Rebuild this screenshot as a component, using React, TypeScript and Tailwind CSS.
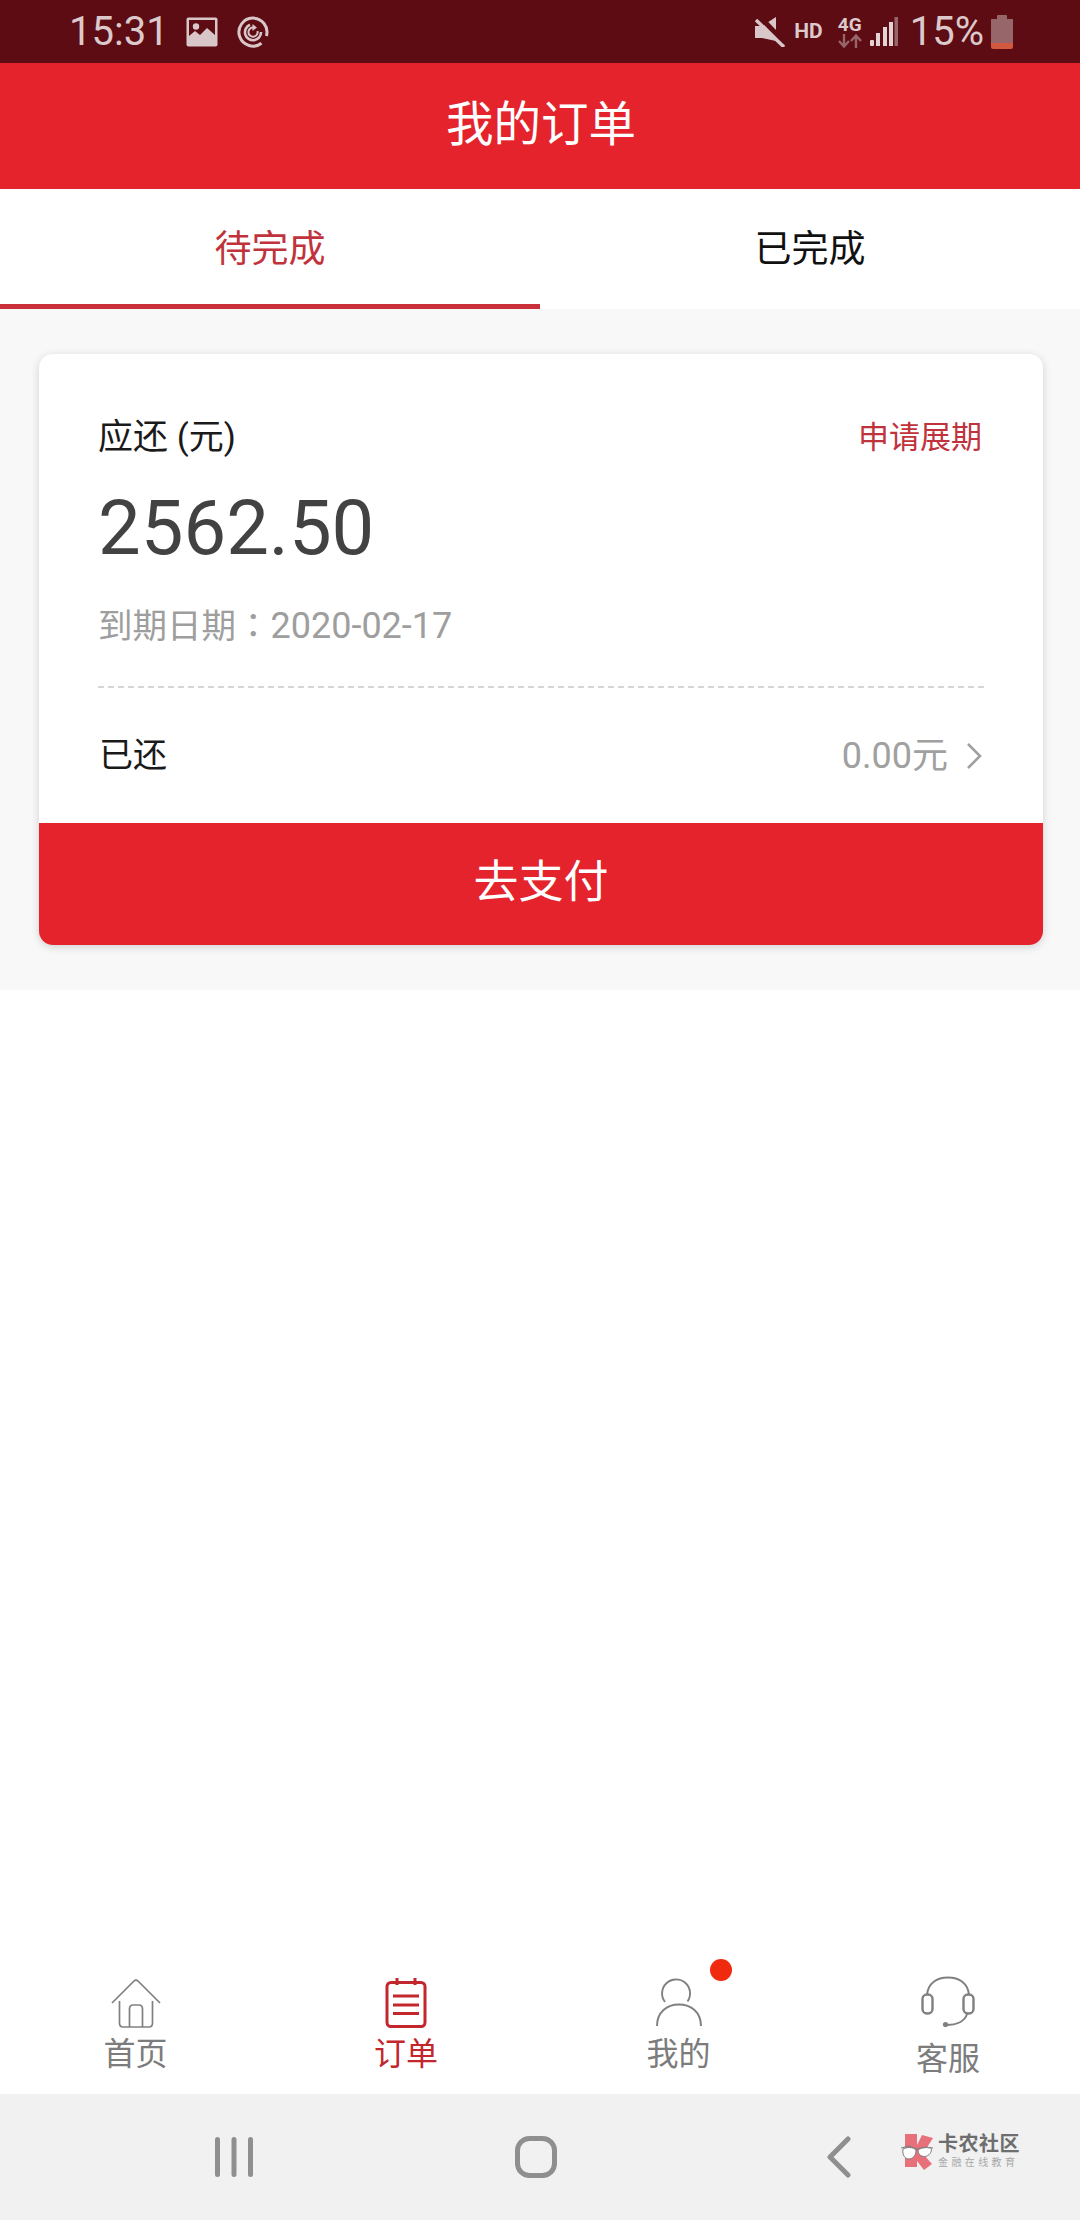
import React from "react";

const FONT = "font-['Roboto','Noto_Sans_CJK_SC',sans-serif]";

// Status bar glyphs
function GalleryIcon() {
  return (
    <svg width="32" height="30" viewBox="0 0 32 30" className="block">
      <rect x="0.5" y="0.5" width="31" height="29" rx="2" fill="#d9c6c9" />
      <rect x="3" y="3" width="26" height="19" fill="#5c0c12" />
      <circle cx="10" cy="9.5" r="3.2" fill="#d9c6c9" />
      <path d="M3 22 L3 19 L9 14 L14 18 L21 11 L29 18 L29 23 Z" fill="#d9c6c9" />
    </svg>
  );
}

function SyncIcon() {
  return (
    <svg width="32" height="32" viewBox="0 0 32 32" fill="none" stroke="#d9c6c9" className="block">
      <path d="M24.5 27.2 A14 14 0 1 1 29.4 20" strokeWidth="3" />
      <path d="M13 8.8 A8 8 0 1 0 24 16" strokeWidth="2.6" />
      <path d="M20.5 15 A4.6 4.6 0 1 1 16.5 11.5" strokeWidth="2" />
      <path d="M15.5 8 L20 11.6 L15.5 15 Z" fill="#d9c6c9" stroke="none" />
    </svg>
  );
}

function MuteIcon() {
  return (
    <svg width="30" height="30" viewBox="0 0 30 30" className="block">
      <path d="M0 9 H7 L21 0 V24 L7 21 H0 Z" fill="#d9c6c9" />
      <path d="M4 -1 L31 27" stroke="#5c0c12" strokeWidth="5" />
      <path d="M1 3 L29 30" stroke="#d9c6c9" strokeWidth="3.4" />
    </svg>
  );
}

function SignalIcon() {
  return (
    <svg width="28" height="30" viewBox="0 0 28 30" className="block">
      <rect x="0" y="23" width="4" height="6" rx="1" fill="#e3d3d5" />
      <rect x="6" y="16" width="4" height="13" fill="#e3d3d5" />
      <rect x="13" y="10" width="4" height="19" fill="#e3d3d5" />
      <rect x="19" y="5" width="4" height="24" fill="#e3d3d5" />
      <rect x="24.5" y="0" width="3.5" height="29" fill="#97666b" />
    </svg>
  );
}

function ArrowsIcon() {
  return (
    <svg width="24" height="14" viewBox="0 0 24 14" fill="none" stroke="#97666b" strokeWidth="2.4" className="block">
      <path d="M6 0 V12 M1 7 L6 12.5 L11 7" />
      <path d="M18 14 V2 M13 7 L18 1.5 L23 7" />
    </svg>
  );
}

function BatteryIcon() {
  return (
    <svg width="22" height="34" viewBox="0 0 22 34" className="block">
      <rect x="6" y="0" width="10" height="5" rx="1" fill="#97666b" />
      <rect x="0" y="4" width="22" height="26" fill="#97666b" />
      <path d="M0 28 H22 V32 A2 2 0 0 1 20 34 H2 A2 2 0 0 1 0 32 Z" fill="#d2593f" />
    </svg>
  );
}

// Tab bar icons
function HomeIcon() {
  return (
    <svg width="50" height="50" viewBox="0 0 50 50" fill="none" stroke="#808080" strokeWidth="1.7" className="block">
      <path d="M1 25 L23 3 Q25 1 27 3 L49 25" />
      <path d="M8.5 23 V45 Q8.5 49 12 49 H38 Q41.5 49 41.5 45 V23" />
      <path d="M18.5 49 V31 Q18.5 27 22 27 H28 Q31.5 27 31.5 31 V49" />
    </svg>
  );
}

function OrderIcon() {
  return (
    <svg width="42" height="50" viewBox="0 0 42 50" fill="none" stroke="#c1272d" className="block">
      <rect x="2" y="4.5" width="38" height="44" rx="4" strokeWidth="3" />
      <path d="M12 0 V7 M30 0 V7" strokeWidth="3" />
      <path d="M8 18 H34 M8 27 H34 M8 35.5 H34" strokeWidth="3" />
    </svg>
  );
}

function UserIcon() {
  return (
    <svg width="46" height="52" viewBox="0 0 46 52" fill="none" stroke="#808080" strokeWidth="1.9" className="block">
      <path d="M9 26 A14 14 0 1 1 31.5 25.5" />
      <path d="M1 50 C1 36 11 28.5 23 28.5 C35 28.5 45 36 45 50" />
    </svg>
  );
}

function HeadsetIcon() {
  return (
    <svg width="54" height="52" viewBox="0 0 54 52" fill="none" stroke="#808080" className="block">
      <path d="M6 19 C7 7 16 1.5 27 1.5 C38 1.5 47 7 48 19" strokeWidth="2" />
      <rect x="1.5" y="18.5" width="10" height="19" rx="4.5" strokeWidth="2.4" />
      <rect x="42.5" y="18.5" width="10" height="19" rx="4.5" strokeWidth="2.4" />
      <path d="M46 38 C44 45 36 49 25 49" strokeWidth="2" />
      <circle cx="24.5" cy="48.5" r="2.6" fill="#808080" stroke="none" />
    </svg>
  );
}

// System navigation glyphs
function RecentsIcon() {
  return (
    <svg width="38" height="40" viewBox="0 0 38 40" className="block" fill="#8f8f8f">
      <rect x="0" y="0" width="5" height="40" rx="2.5" />
      <rect x="16.5" y="0" width="5" height="40" rx="2.5" />
      <rect x="33" y="0" width="5" height="40" rx="2.5" />
    </svg>
  );
}

function HomeButtonIcon() {
  return (
    <svg width="42" height="42" viewBox="0 0 42 42" fill="none" className="block">
      <rect x="2.5" y="2.5" width="37" height="37" rx="12" stroke="#8f8f8f" strokeWidth="5" />
    </svg>
  );
}

function BackIcon() {
  return (
    <svg width="24" height="42" viewBox="0 0 24 42" fill="none" className="block">
      <path d="M21 3 L3 21 L21 39" stroke="#8f8f8f" strokeWidth="5" strokeLinecap="round" strokeLinejoin="round" />
    </svg>
  );
}

function BrandMark() {
  return (
    <svg width="34" height="36" viewBox="0 0 34 36" className="block">
      <path d="M5 0 H17 V11 L22 1 L33 4 L26 15 H18 L24 21 L32 30 L24 36 L17 27 V33 H5 Z" fill="#e8707b" />
      <path d="M1 14 L9 12 L17 15 L26 13 L33 14" fill="none" stroke="#7a7a7a" strokeWidth="1" />
      <path d="M3 15 C9 12 16 14 16 17 C16 22 12 25 9 25 C5 25 2 21 3 15 Z" fill="#ffffff" stroke="#7a7a7a" strokeWidth="1" />
      <path d="M18 16 C22 13 30 13 31.5 15 C31.5 20 27 23 23.5 22.5 C20 22 18 20 18 16 Z" fill="#ffffff" stroke="#7a7a7a" strokeWidth="1" />
    </svg>
  );
}

function TabItem({
  icon,
  label,
  active,
  width,
  labelGap,
}: {
  icon: React.ReactNode;
  label: string;
  active?: boolean;
  width: string;
  labelGap?: string;
}) {
  return (
    <div className={`flex flex-col items-center pt-[26px] ${width}`}>
      <div className="flex h-[53px] items-end">{icon}</div>
      <span
        className={`text-[32px] leading-[40px] ${active ? "text-[#c1272d]" : "text-[#7c7c7c]"} ${labelGap ?? "mt-[6px]"}`}
      >
        {label}
      </span>
    </div>
  );
}

export default function App() {
  return (
    <div className={`flex h-[2220px] w-[1080px] flex-col bg-white ${FONT}`}>
      {/* Status bar */}
      <div className="flex h-[63px] shrink-0 items-center justify-between bg-[#5c0c12] pl-[69px] pr-[67px] text-[#dcc9cc]">
        <div className="flex items-center">
          <span className="text-[40px] leading-none">15:31</span>
          <div className="ml-[17px]"><GalleryIcon /></div>
          <div className="ml-[19px]"><SyncIcon /></div>
        </div>
        <div className="flex items-center">
          <MuteIcon />
          <span className="ml-[9px] text-[21px] font-bold leading-none">HD</span>
          <div className="ml-[15px] flex flex-col items-center">
            <span className="text-[19px] font-bold leading-[18px]">4G</span>
            <ArrowsIcon />
          </div>
          <div className="ml-[8px]"><SignalIcon /></div>
          <span className="ml-[12px] text-[40px] leading-none">15%</span>
          <div className="ml-[7px]"><BatteryIcon /></div>
        </div>
      </div>

      {/* Header */}
      <div className="flex h-[126px] shrink-0 items-center justify-center bg-[#e4232c] pl-[2px]">
        <h1 className="text-[47.5px] font-normal leading-none text-white">我的订单</h1>
      </div>

      {/* Tabs */}
      <div className="flex h-[120px] shrink-0 bg-white">
        <div className="flex w-1/2 items-center justify-center border-b-[5px] border-[#c9303a] pt-[7px] text-[37px] text-[#c1333c]">
          待完成
        </div>
        <div className="flex w-1/2 items-center justify-center pt-[2px] text-[37px] text-[#111111]">
          已完成
        </div>
      </div>

      {/* Order list */}
      <div className="shrink-0 bg-[#f8f8f8] pb-[45px] pl-[39px] pr-[37px] pt-[45px]">
        <div className="overflow-hidden rounded-[14px] bg-white shadow-[0_2px_8px_rgba(0,0,0,0.16)]">
          <div className="px-[59px] pt-[64px]">
            <div className="flex items-center justify-between">
              <span className="text-[35px] leading-[40px] text-[#1a1a1a]">应还 (元)</span>
              <span className="mr-[2px] text-[31px] leading-[40px] text-[#c1333c]">申请展期</span>
            </div>
            <div className="mt-[26px] text-[76px] leading-[88px] text-[#424242]">2562.50</div>
            <div className="mt-[30px] text-[36px] leading-[42px] text-[#9e9e9e]">
              <span className="text-[34.5px]">到期日期</span>
              <span className="text-[34.5px] font-['Noto_Sans_CJK_TC',sans-serif]">：</span>2020-02-17
            </div>
            <div className="mt-[39px] border-t-2 border-dashed border-[#d6d6d6]" />
          </div>
          <div className="flex h-[135px] items-center justify-between pl-[60px] pr-[61px]">
            <span className="text-[34px] text-[#1a1a1a]">已还</span>
            <div className="flex items-center">
              <span className="text-[36px] text-[#a0a0a0]">0.00元</span>
              <svg width="16" height="28" viewBox="0 0 16 28" fill="none" className="ml-[18px] block">
                <path d="M2 2 L14 14 L2 26" stroke="#a0a0a0" strokeWidth="2.6" />
              </svg>
            </div>
          </div>
          <div className="flex h-[122px] items-center justify-center bg-[#e4232c] pb-[2px] text-[45px] text-white">
            去支付
          </div>
        </div>
      </div>

      <div className="flex-1" />

      {/* Bottom tab bar */}
      <div className="flex h-[145px] shrink-0 bg-white">
        <TabItem width="w-[271px]" icon={<HomeIcon />} label="首页" />
        <TabItem width="w-[270px]" icon={<OrderIcon />} label="订单" active />
        <div className="relative flex w-[275px]">
          <TabItem width="w-full" icon={<UserIcon />} label="我的" />
          <span className="absolute left-[169px] top-[10px] h-[22px] w-[22px] rounded-full bg-[#f02a0e]" />
        </div>
        <TabItem width="w-[264px]" icon={<HeadsetIcon />} label="客服" labelGap="mt-[11px]" />
      </div>

      {/* System navigation bar */}
      <div className="relative flex h-[126px] shrink-0 items-center bg-[#f1f1f1]">
        <div className="ml-[215px]"><RecentsIcon /></div>
        <div className="ml-[262px]"><HomeButtonIcon /></div>
        <div className="ml-[270px]"><BackIcon /></div>
        {/* Community watermark */}
        <div className="absolute left-[900px] top-[39px] flex items-center">
          <BrandMark />
          <div className="ml-[4px] flex flex-col">
            <span className="text-[20px] font-bold leading-[23px] tracking-[0.5px] text-[#6e6e6e]">卡农社区</span>
            <span className="text-[10px] leading-[14px] tracking-[3.4px] text-[#a8a8a8]">金融在线教育</span>
          </div>
        </div>
      </div>
    </div>
  );
}
